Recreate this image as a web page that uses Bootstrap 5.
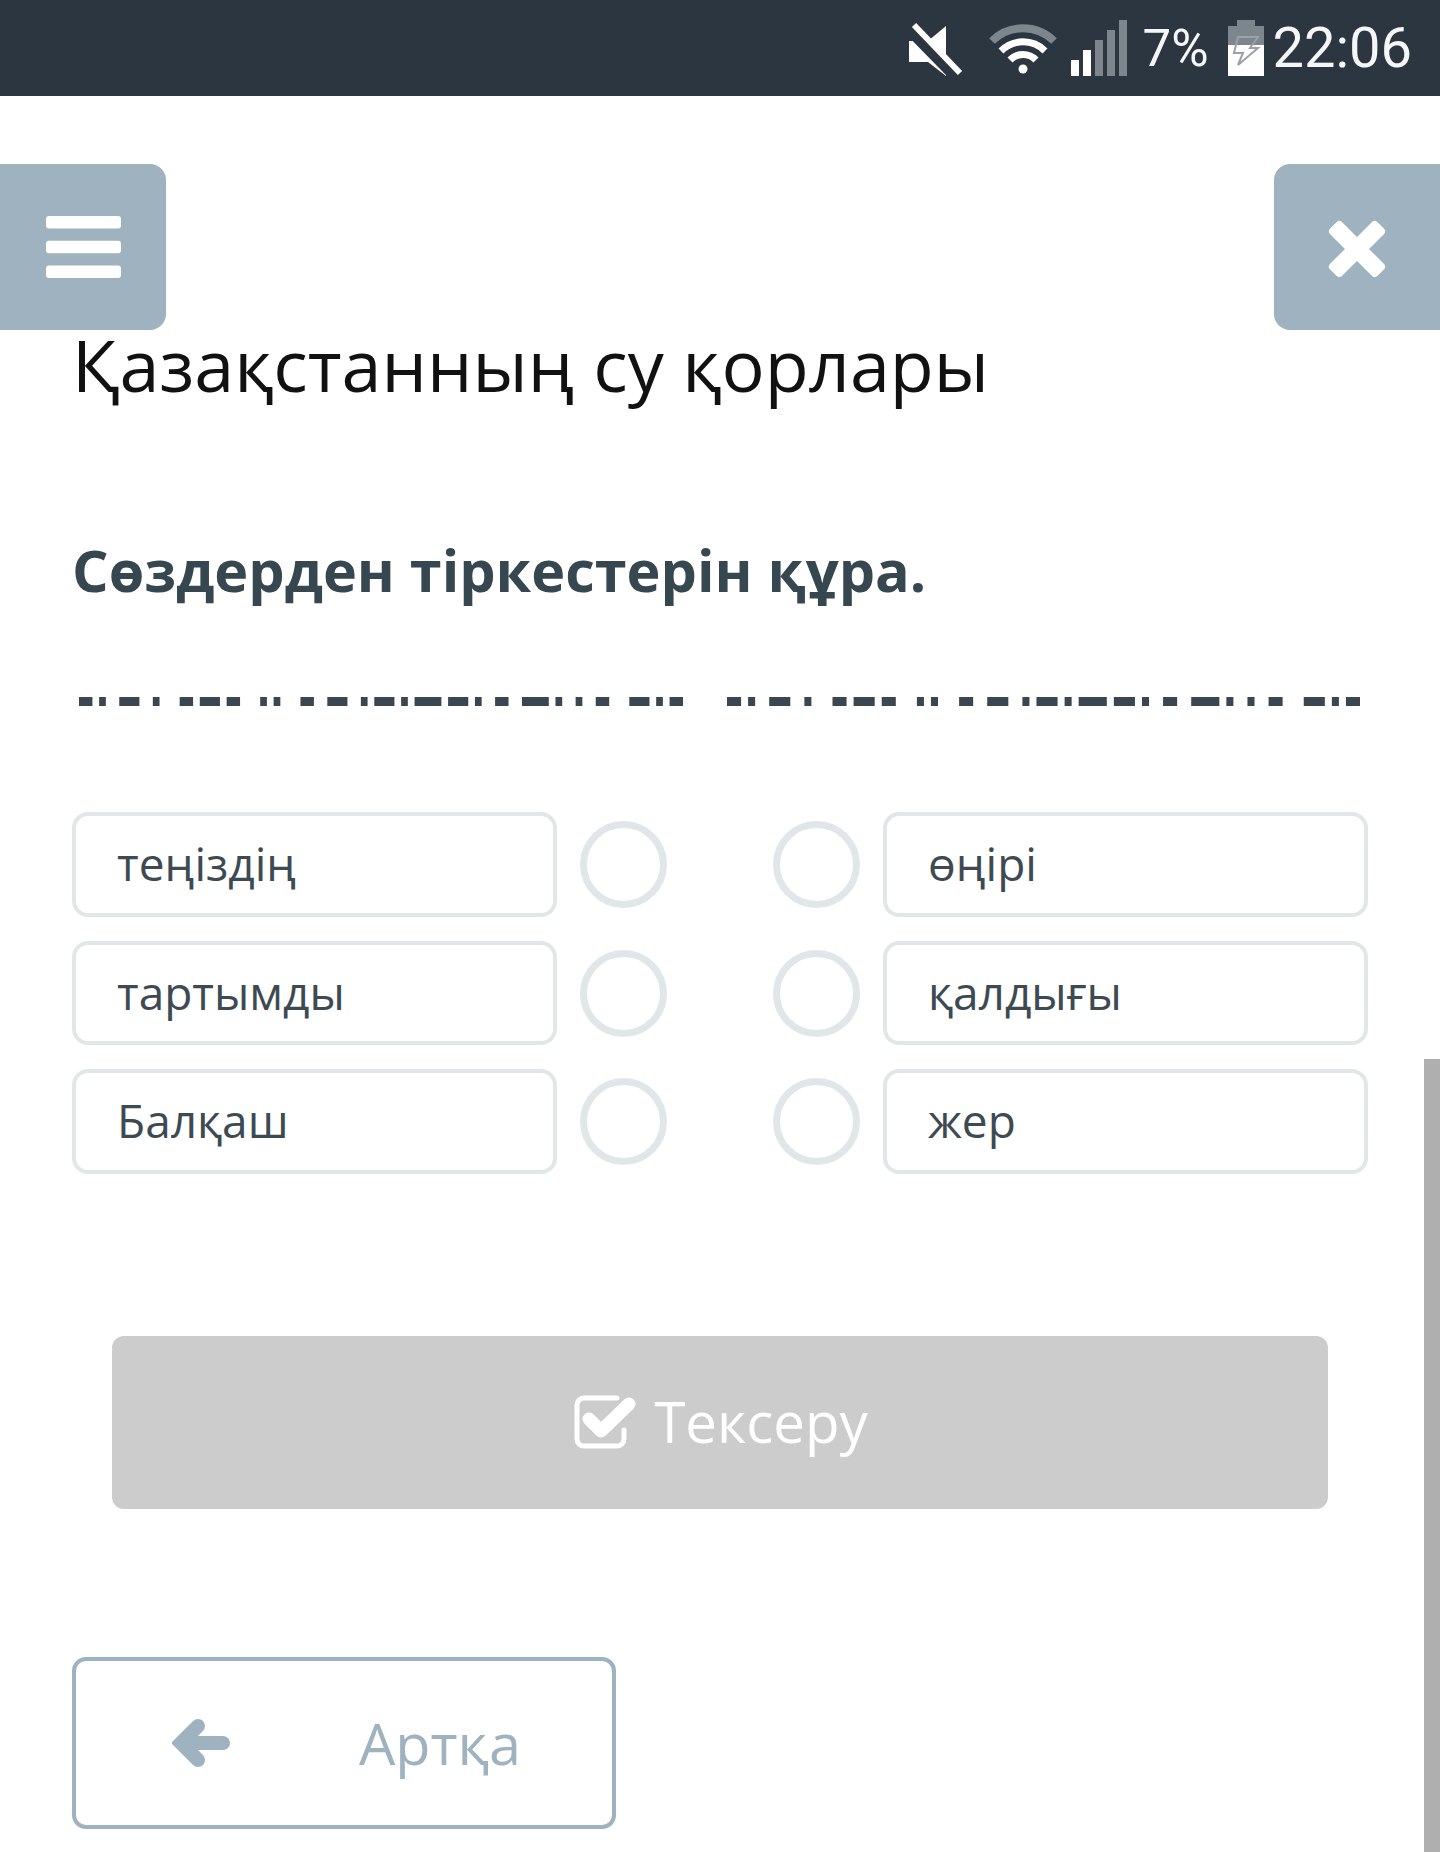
<!DOCTYPE html>
<html lang="kk">
<head>
<meta charset="utf-8">
<title>Қазақстанның су қорлары</title>
<link href="https://cdn.jsdelivr.net/npm/bootstrap@5.3.0/dist/css/bootstrap.min.css" rel="stylesheet">
<style>
html,body{height:1852px;overflow:hidden;background:#fff}
body{font-family:"Open Sans","Noto Sans","Liberation Sans",sans-serif;color:#37474f;position:relative}
.statusbar{height:96px;background:#2b3640;color:#f4f6f7;font-family:Roboto,"Liberation Sans",sans-serif;font-weight:400;padding-right:28px}
.sb-pct{font-size:51px;line-height:1;margin-left:16px;margin-right:19px}
.sb-time{font-size:56px;line-height:1;margin-left:9px}
.sb-ico{display:block;flex:none}
.sb-signal{margin-left:14px}
.corner{width:166px;height:166px;background:#9eb3bf;border:0;padding:0;border-radius:0 16px 16px 0}
.corner-r{border-radius:16px 0 0 16px}
.corner:hover,.corner:active{background:#9eb3bf!important}
.topbtns{margin-top:68px}
.page{padding:0 72px}
.title1{font-size:71.9px;font-weight:400;color:#111;line-height:1.2;margin:-9px 0 0}
.title2{font-size:57.5px;font-weight:700;line-height:1.2;margin:129px 0 0;color:#37474f}
.dashrow{margin-top:92px;height:9px;gap:0}
.dash{display:block;height:9px;fill:#3a4750;flex:none}
.dash-l{width:604px;margin-left:7px}
.dash-r{width:633px;margin-left:44px}
.pairs{margin-top:106px;gap:108px}
.pair-col{flex:1 1 0;gap:24px}
.pair-row{gap:23px}
.word{flex:1 1 0;height:104.5px;border:4px solid #e1e7e9;border-radius:16px;background:#fff;font-size:46px;line-height:95px;padding-left:41px;color:#3d4a52}
.dot{width:87px;height:87px;border:7px solid #e1e7e9;border-radius:50%;flex:none;background:#fff}
.pair-row .word + .dot{margin-right:-1px}
.pair-row .dot:first-child{margin-left:-1px}
.checkwrap{margin-top:162px;padding:0 40px}
.btn-check-x{width:100%;height:173px;background:#ccc;border:0;border-radius:12px;color:#fff;font-size:56.5px;gap:18px;opacity:1;padding-left:14px}
.btn-check-x:hover,.btn-check-x:active,.btn-check-x:disabled{background:#ccc!important;color:#fff!important;opacity:1}
.btn-back{width:544px;height:172px;margin-top:148px;border:4px solid #9eb3bf;border-radius:14px;background:#fff;color:#9eb3bf;font-size:57.5px;padding:0 0 0 96px;gap:129px}
.btn-back:hover,.btn-back:active{background:#fff!important;color:#9eb3bf!important;border-color:#9eb3bf!important}
.scrolltrack{position:absolute;right:0;top:1059px;width:16px;height:793px;background:#afafaf}
</style>
</head>
<body>
<div class="statusbar d-flex align-items-center justify-content-end">
  <svg class="sb-ico me-4" width="56" height="56" viewBox="0 0 56 56" aria-hidden="true">
    <path d="M0 21H19L37 6V56L19 42H0Z" fill="#fff"/>
    <path d="M0 3L50 54" stroke="#2b3640" stroke-width="13" transform="translate(-3 2)"/>
    <path d="M5 5L51 53" stroke="#fff" stroke-width="6"/>
  </svg>
  <svg class="sb-ico" width="68" height="56" viewBox="0 0 68 56" aria-hidden="true" fill="none" stroke-linecap="butt">
    <path d="M3 21A44 44 0 0 1 65 21" stroke="#7c868c" stroke-width="8"/>
    <path d="M12 31A31 31 0 0 1 56 31" stroke="#fff" stroke-width="7"/>
    <path d="M21 40A18 18 0 0 1 47 40" stroke="#fff" stroke-width="7"/>
    <circle cx="34" cy="49" r="4.5" fill="#fff"/>
  </svg>
  <svg class="sb-ico sb-signal" width="56" height="56" viewBox="0 0 56 56" aria-hidden="true">
    <rect x="0" y="40" width="8" height="16" fill="#fff"/>
    <rect x="12" y="30" width="8" height="26" fill="#fff"/>
    <rect x="24" y="20" width="8" height="36" fill="#7c868c"/>
    <rect x="36" y="10" width="8" height="46" fill="#7c868c"/>
    <rect x="48" y="0" width="8" height="56" fill="#7c868c"/>
  </svg>
  <span class="sb-pct">7%</span>
  <svg class="sb-ico" width="36" height="56" viewBox="0 0 36 56" aria-hidden="true">
    <path d="M9 0H27V6H36V25H0V6H9Z" fill="#7c868c"/>
    <rect x="0" y="25" width="36" height="31" fill="#fff"/>
    <path d="M10 17H30L22 28H30L10 45L15 33H6Z" fill="none" stroke="#9aa2a7" stroke-width="2"/>
  </svg>
  <span class="sb-time">22:06</span>
</div>

<div class="topbtns d-flex justify-content-between">
  <button class="btn corner d-flex align-items-center justify-content-center" aria-label="Мәзір">
    <svg width="75" height="62" viewBox="0 0 75 62" aria-hidden="true" fill="#fff">
      <rect width="75" height="12.5" rx="3"/><rect y="24.7" width="75" height="12.5" rx="3"/><rect y="49.4" width="75" height="12.5" rx="3"/>
    </svg>
  </button>
  <button class="btn corner corner-r d-flex align-items-center justify-content-center" aria-label="Жабу">
    <svg width="60" height="64" viewBox="-30 -34 60 64" aria-hidden="true" fill="#fff">
      <rect x="-33.5" y="-8.5" width="67" height="17" rx="4" transform="rotate(45)"/>
      <rect x="-33.5" y="-8.5" width="67" height="17" rx="4" transform="rotate(-45)"/>
    </svg>
  </button>
</div>

<div class="page">
  <h1 class="title1">Қазақстанның су қорлары</h1>
  <h2 class="title2">Сөздерден тіркестерін құра.</h2>

  <svg width="0" height="0" class="position-absolute" aria-hidden="true">
    <defs>
      <g id="dashes">
        <rect x="0" width="2" height="1"/><rect x="3" width="1" height="1"/><rect x="6" width="3" height="1"/><rect x="11" width="1" height="1"/><rect x="15" width="2" height="1"/><rect x="18" width="3" height="1"/><rect x="22" width="2" height="1"/><rect x="27" width="1" height="1"/><rect x="29" width="1" height="1"/><rect x="33" width="2" height="1"/><rect x="37" width="3" height="1"/><rect x="42" width="1" height="1"/><rect x="44" width="3" height="1"/><rect x="48" width="1" height="1"/><rect x="50" width="4" height="1"/><rect x="55" width="3" height="1"/><rect x="59" width="1" height="1"/><rect x="62" width="2" height="1"/><rect x="66" width="4" height="1"/><rect x="71" width="1" height="1"/><rect x="74" width="1" height="1"/><rect x="77" width="2" height="1"/><rect x="82" width="3" height="1"/><rect x="86" width="1" height="1"/><rect x="88" width="2" height="1"/>
      </g>
    </defs>
  </svg>
  <div class="dashrow d-flex">
    <svg class="dash dash-l" viewBox="0 0 90 1" preserveAspectRatio="none" aria-hidden="true"><use href="#dashes"/></svg>
    <svg class="dash dash-r" viewBox="0 0 90 1" preserveAspectRatio="none" aria-hidden="true"><use href="#dashes"/></svg>
  </div>

  <div class="pairs d-flex">
    <div class="pair-col d-flex flex-column">
      <div class="pair-row d-flex align-items-center"><div class="word">теңіздің</div><div class="dot"></div></div>
      <div class="pair-row d-flex align-items-center"><div class="word">тартымды</div><div class="dot"></div></div>
      <div class="pair-row d-flex align-items-center"><div class="word">Балқаш</div><div class="dot"></div></div>
    </div>
    <div class="pair-col d-flex flex-column">
      <div class="pair-row d-flex align-items-center"><div class="dot"></div><div class="word">өңірі</div></div>
      <div class="pair-row d-flex align-items-center"><div class="dot"></div><div class="word">қалдығы</div></div>
      <div class="pair-row d-flex align-items-center"><div class="dot"></div><div class="word">жер</div></div>
    </div>
  </div>

  <div class="checkwrap">
    <button class="btn btn-check-x d-flex align-items-center justify-content-center" disabled>
      <svg width="62" height="54" viewBox="0 0 62 54" aria-hidden="true" fill="none" stroke="#fff">
        <path d="M50 35V44A7 7 0 0 1 43 51H10A7 7 0 0 1 3 44V10A7 7 0 0 1 10 3H43" stroke-width="5" stroke-linecap="round"/>
        <path d="M15 24L27 36L55 9" stroke-width="13" stroke-linecap="round" stroke-linejoin="round"/>
      </svg>
      <span>Тексеру</span>
    </button>
  </div>

  <button class="btn btn-back d-flex align-items-center">
    <svg width="58" height="48" viewBox="0 0 58 48" aria-hidden="true" fill="none" stroke="#9eb3bf" stroke-width="14" stroke-linecap="round" stroke-linejoin="miter">
      <path d="M51 24H10"/>
      <path d="M26 7L9 24L26 41"/>
    </svg>
    <span>Артқа</span>
  </button>
</div>

<div class="scrolltrack"></div>
<script src="https://cdn.jsdelivr.net/npm/bootstrap@5.3.0/dist/js/bootstrap.bundle.min.js"></script>
</body>
</html>
